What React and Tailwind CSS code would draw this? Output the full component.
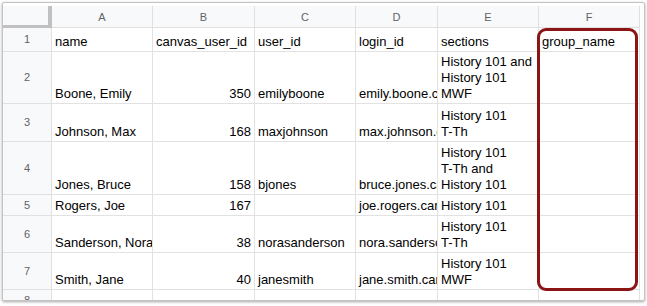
import React from "react";

const colW = ["w-[101px]", "w-[102px]", "w-[101px]", "w-[82px]", "w-[101px]", "w-[101px]"];
const letters = ["A", "B", "C", "D", "E", "F"];

const rows = [
  { n: 1, h: "h-[24px]", cells: ["name", "canvas_user_id", "user_id", "login_id", "sections", "group_name"] },
  { n: 2, h: "h-[52px]", cells: ["Boone, Emily", "350", "emilyboone", "emily.boone.canvas@example.com", "History 101 and History 101 MWF", ""] },
  { n: 3, h: "h-[38px]", cells: ["Johnson, Max", "168", "maxjohnson", "max.johnson.canvas@example.com", "History 101 T-Th", ""] },
  { n: 4, h: "h-[53px]", cells: ["Jones, Bruce", "158", "bjones", "bruce.jones.canvas@example.com", "History 101 T-Th and History 101", ""] },
  { n: 5, h: "h-[21px]", cells: ["Rogers, Joe", "167", "", "joe.rogers.canvas@example.com", "History 101", ""] },
  { n: 6, h: "h-[37px]", cells: ["Sanderson, Nora", "38", "norasanderson", "nora.sanderson@example.com", "History 101 T-Th", ""] },
  { n: 7, h: "h-[37px]", cells: ["Smith, Jane", "40", "janesmith", "jane.smith.canvas@example.com", "History 101 MWF", ""] },
  { n: 8, h: "h-[21px]", cells: ["", "", "", "", "", ""] },
];

const sectionLines = {
  "History 101 and History 101 MWF": ["History 101 and", "History 101", "MWF"],
  "History 101 T-Th": ["History 101", "T-Th"],
  "History 101 T-Th and History 101": ["History 101", "T-Th and", "History 101"],
  "History 101": ["History 101"],
  "History 101 MWF": ["History 101", "MWF"],
};

export default function App() {
  return (
    <div className="w-[647px] h-[306px] bg-white p-[2px] overflow-hidden" style={{ fontFamily: '"Liberation Sans", Arial, sans-serif' }}>
      <div className="relative w-[643px] h-[299px] border border-[#c4c4c4] rounded-[2px] bg-white overflow-hidden shadow-[0_1px_3px_rgba(0,0,0,0.35)]">
        <div className="pt-[3px]">
          <div className="flex h-[22px]">
            <div className="w-[49px] shrink-0 bg-[#f8f9fa] border-r-[4px] border-b-[3px] border-[#c0c0c0]" />
            {letters.map((l, i) => (
              <div
                key={l}
                className={`${colW[i]} shrink-0 flex items-center justify-center pt-[2px] bg-[#f8f9fa] border-r border-b border-[#e0e0e0] text-[11px] text-[#5f6368]`}
              >
                {l}
              </div>
            ))}
          </div>
          {rows.map((r) => (
            <div key={r.n} className={`flex ${r.h}`}>
              <div className="w-[49px] shrink-0 flex items-center justify-center bg-[#f8f9fa] border-r border-b border-[#e0e0e0] text-[11px] text-[#5f6368]">
                {r.n}
              </div>
              {r.cells.map((c, i) => {
                const isNum = i === 1 && r.n > 1;
                const lines = i === 4 && sectionLines[c] ? sectionLines[c] : [c];
                return (
                  <div
                    key={i}
                    className={`${colW[i]} shrink-0 flex flex-col justify-end overflow-hidden border-r border-b border-[#e2e2e2] px-[3px] pb-[1px] text-[13px] leading-[16px] text-black whitespace-nowrap ${isNum ? "items-end" : "items-start"}`}
                  >
                    {lines.map((t, k) => (
                      <span key={k}>{t}</span>
                    ))}
                  </div>
                );
              })}
            </div>
          ))}
        </div>
        <div className="absolute left-[534px] top-[25px] w-[101px] h-[263px] border-[3px] border-[#8b1414] rounded-[9px]" />
      </div>
    </div>
  );
}
